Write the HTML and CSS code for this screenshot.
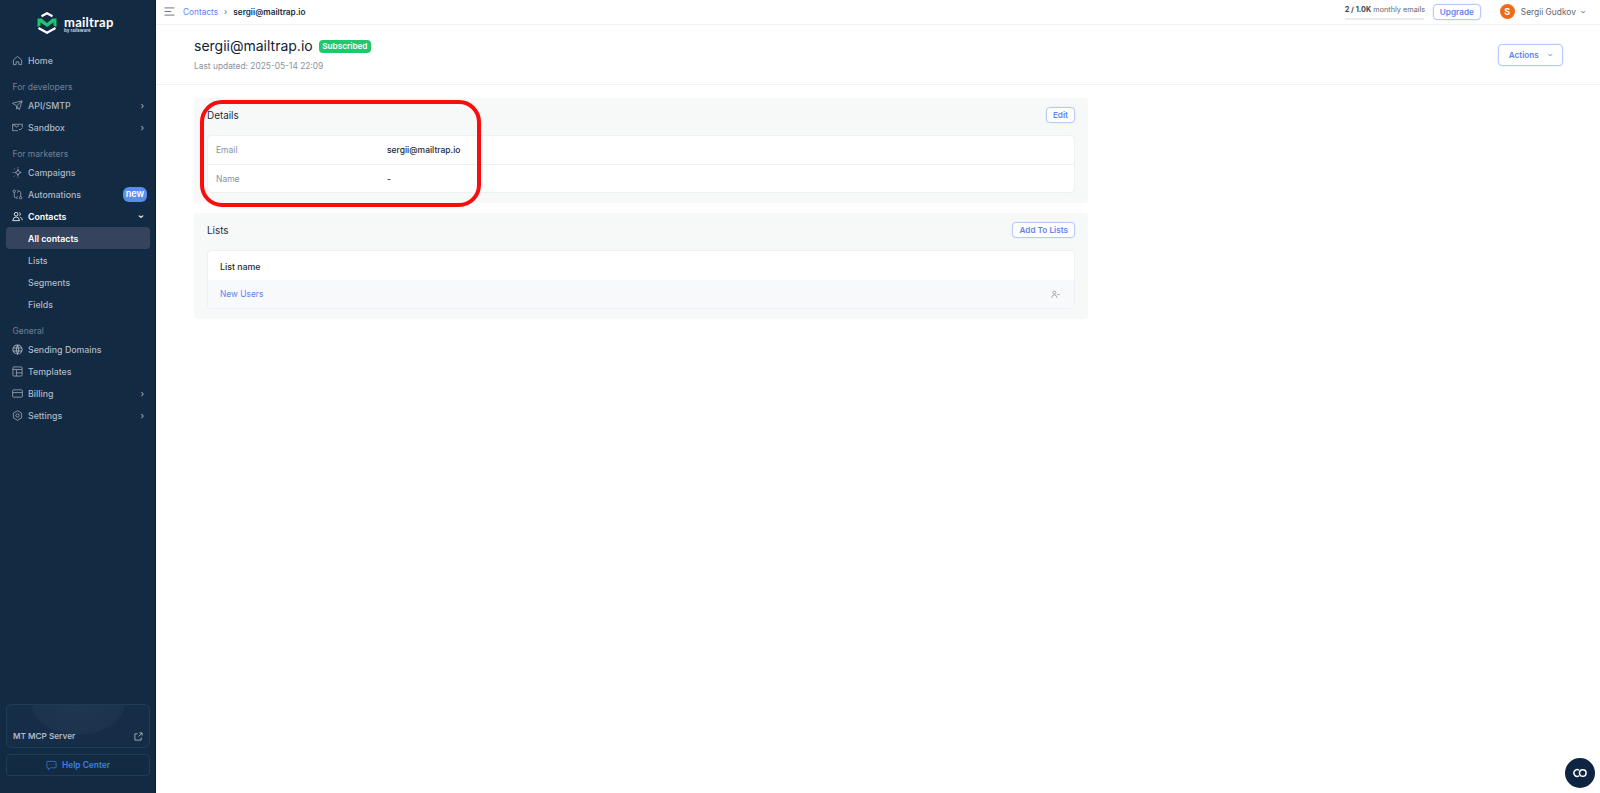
FILE: index.html
```html
<!DOCTYPE html>
<html lang="en">
<head>
<meta charset="utf-8">
<title>sergii@mailtrap.io</title>
<link rel="stylesheet" href="styles.css">
</head>
<body>
<div class="app">
  <aside class="sidebar">
    <div class="logo">
      <svg class="logo-mark" width="20" height="22" viewBox="0 0 20 22" fill="none">
        <path d="M4.500 4.200 10 1.200l5.500 3" stroke="#fff" stroke-width="2.200"/>
        <path d="M1.500 16 10 20.800 18.500 16" stroke="#fff" stroke-width="2.200"/>
        <path d="M.5 6.500h4L10 11l5.500-4.500h4V15l-3 -1.500V10.500L10 15 3.500 10.500v3L.5 15Z" fill="#21c46e"/>
      </svg>
      <div class="logo-text"><span class="logo-name">mailtrap</span><span class="logo-sub">by railsware</span></div>
    </div>
    <nav class="nav">
      <a class="item"><svg class="ic" viewBox="0 0 12 12"><path d="M1.500 5.500 6 1.500l4.500 4V10.500H7.500V7.500h-3v3H1.500Z"/></svg>Home</a>
      <div class="group">For developers</div>
      <a class="item"><svg class="ic" viewBox="0 0 12 12"><path d="M.5 3.500 11 1 8 10.500 5 6.500Zm4.500 3L11 1M5 6.500V10l1.500-1.500"/></svg>API/SMTP<span class="chev">›</span></a>
      <a class="item"><svg class="ic" viewBox="0 0 12 12"><path d="M6.500 9.500H.7V2.500h10.500V5.500M.7 2.500 5 5.500l2.500-1.500M7.500 7.500l1.300 1.300L11.500 6"/></svg>Sandbox<span class="chev">›</span></a>
      <div class="group">For marketers</div>
      <a class="item"><svg class="ic" viewBox="0 0 12 12"><path d="M6.500 2.500 7.500 5l2.500 1-2.500 1-1 2.500-1-2.500L3 6l2.500-1ZM.6 6h1.200M2 1.500l1 1M2 10.500l1-1M6.500.3v1.200M6.500 10.500v1.200"/></svg>Campaigns</a>
      <a class="item"><svg class="ic" viewBox="0 0 12 12"><circle cx="2.500" cy="2.500" r="1.300"/><circle cx="9.500" cy="9.500" r="1.300"/><path d="M2.500 4v4q0 1.500 1.500 1.500h1M9.500 8V4Q9.500 2.500 8 2.500H7M6 1 7 2.500 6 4M6 8 5 9.500 6 11"/></svg>Automations<span class="badge">new</span></a>
      <a class="item strong"><svg class="ic" viewBox="0 0 12 12"><circle cx="4.500" cy="3.500" r="2"/><path d="M.8 10.500q.5-4 3.700-4t3.700 4ZM8 1.700a2 2 0 0 1 0 3.600M9 6.800q2 .8 2.300 3.200"/></svg>Contacts<span class="chev down">›</span></a>
      <a class="item sub active">All contacts</a>
      <a class="item sub">Lists</a>
      <a class="item sub">Segments</a>
      <a class="item sub">Fields</a>
      <div class="group">General</div>
      <a class="item"><svg class="ic solid" viewBox="0 0 12 12"><circle cx="6" cy="6" r="5"/><path d="M1 4.300h10M1 7.700h10M6 1Q3.500 6 6 11 8.500 6 6 1"/></svg>Sending Domains</a>
      <a class="item"><svg class="ic" viewBox="0 0 12 12"><rect x="1" y="1" width="10" height="10" rx="1"/><path d="M1 3.800h10M4.800 3.800V11M4.800 7.500H11"/></svg>Templates</a>
      <a class="item"><svg class="ic" viewBox="0 0 12 12"><rect x=".7" y="2" width="10.600" height="8" rx="1"/><path d="M.7 5h10.600"/></svg>Billing<span class="chev">›</span></a>
      <a class="item"><svg class="ic" viewBox="0 0 12 12"><path d="M6 .8 10.500 3.400v5.200L6 11.200 1.500 8.600V3.400Z"/><circle cx="6" cy="6" r="1.800"/></svg>Settings<span class="chev">›</span></a>
    </nav>
    <div class="side-foot">
      <div class="mcp">
        <span class="mcp-title">MT MCP Server</span>
        <svg class="mcp-ic" viewBox="0 0 10 10"><path d="M4 2H1v7h7V6M5 5 9 1M6 1h3v3"/></svg>
      </div>
      <a class="help">
        <svg class="help-ic" viewBox="0 0 12 12"><path d="M2 1.500h8q1 0 1 1v5q0 1-1 1H5L2.500 10.500V8.500H2q-1 0-1-1v-5q0-1 1-1ZM3.500 5h.5M5.800 5h.5M8 5h.5"/></svg>
        Help Center
      </a>
    </div>
  </aside>

  <main class="main">
    <header class="topbar">
      <div class="crumbs">
        <svg class="burger" viewBox="0 0 12 10"><path d="M.5 1h11M.5 5h7.500M.5 9h11"/></svg>
        <a class="link">Contacts</a><span class="sep">›</span><span class="crumb-now">sergii@mailtrap.io</span>
      </div>
      <div class="top-right">
        <div class="quota">
          <div class="quota-text"><b>2 / 1.0K</b> monthly emails</div>
          <div class="quota-bar"></div>
        </div>
        <button class="btn upgrade">Upgrade</button>
        <div class="user">
          <span class="avatar">S</span>
          <span class="user-name">Sergii Gudkov</span>
          <span class="user-chev">›</span>
        </div>
      </div>
    </header>

    <section class="page-head">
      <div>
        <div class="title-row">
          <h1>sergii@mailtrap.io</h1>
          <span class="status">Subscribed</span>
        </div>
        <div class="updated">Last updated: 2025-05-14 22:09</div>
      </div>
      <button class="btn actions">Actions <span class="btn-chev">›</span></button>
    </section>

    <div class="content">
      <section class="card">
        <div class="card-head">
          <h2>Details</h2>
          <button class="btn small">Edit</button>
        </div>
        <div class="panel">
          <div class="row"><span class="label">Email</span><span class="value">sergii@mailtrap.io</span></div>
          <div class="row"><span class="label">Name</span><span class="value">-</span></div>
        </div>
      </section>

      <section class="card">
        <div class="card-head">
          <h2>Lists</h2>
          <button class="btn small">Add To Lists</button>
        </div>
        <div class="panel">
          <div class="thead">List name</div>
          <div class="tbody">
            <a class="link">New Users</a>
            <svg class="remove" viewBox="0 0 12 12"><circle cx="4.500" cy="3.500" r="2"/><path d="M1 10.500q.5-4 3.500-4t3.500 4M8.500 6h3"/></svg>
          </div>
        </div>
      </section>
    </div>
  </main>
</div>
<div class="annotation"></div>
<button class="chat"><svg viewBox="0 0 16 10"><path d="M7 2.200A3.300 3.300 0 1 0 7 7.800"/><circle cx="10.800" cy="5" r="3.300"/></svg></button>
</body>
</html>
```
FILE: styles.css
```css
* { box-sizing: border-box; }
html, body { height: 100%; }
body {
  margin: 0;
  font-family: Inter, "Liberation Sans", sans-serif;
  font-size: 8.800px;
  color: #0f2137;
  background: #fff;
  overflow: hidden;
}
h1, h2 { margin: 0; font-weight: 400; }
a { text-decoration: none; }

.app { display: flex; height: 793px; }

/* Sidebar */
.sidebar {
  width: 156px;
  flex: none;
  display: flex;
  flex-direction: column;
  background: #132a43;
  border-right: 1px solid #0d1e31;
}
.logo {
  height: 49px;
  padding: 12px 0 0 37px;
  display: flex;
  gap: 7px;
}
.logo-mark { flex: none; }
.logo-text { display: flex; flex-direction: column; color: #fff; padding-top: 4px; }
.logo-name { font: 700 13px/12px Lato, sans-serif; letter-spacing: .25px; }
.logo-sub { font-size: 4.500px; line-height: 5px; color: #c8d0da; font-weight: 700; }

.nav { display: flex; flex-direction: column; flex: 1; }
.item {
  height: 22px;
  margin: 0 5px 0 6px;
  padding: 0 6px;
  display: flex;
  align-items: center;
  gap: 5px;
  border-radius: 4px;
  color: #aeb8c4;
  font-weight: 500;
  position: relative;
}
.strong { color: #fff; font-weight: 600; }
.sub { padding-left: 22px; }
.active { background: #35435d; color: #fff; font-weight: 600; }
.ic {
  width: 11px; height: 11px; flex: none;
  fill: none; stroke: #9aa6b4; stroke-width: .9;
}
.ic.solid { stroke-width: 1.100; }
.strong .ic { stroke: #fff; }
.group {
  height: 15px;
  margin-top: 8px;
  padding-left: 12.500px;
  display: flex;
  align-items: center;
  font-size: 8.500px;
  color: #6f8096;
}
.chev { margin-left: auto; font-size: 9px; margin-right: 0; color: #9aa6b4; }
.chev.down { transform: rotate(90deg); color: #fff; }
.badge {
  margin-left: auto;
  margin-right: -3px;
  width: 24px; height: 15px;
  border-radius: 6px;
  background: #5b8def;
  color: #fff;
  font-size: 9.200px;
  font-weight: 600;
  text-align: center;
  line-height: 14px;
}

.side-foot { padding: 0 5px 17px 6px; display: flex; flex-direction: column; gap: 6px; }
.mcp {
  height: 44px;
  border: 1px solid #223c57;
  border-radius: 5px;
  display: flex;
  align-items: flex-end;
  justify-content: space-between;
  padding: 0 6px 6px 6px;
  background: radial-gradient(ellipse 47px 30px at 50% 0, #1f3750 0, #1b334d 96%, #162d47 100%);
}
.mcp-title { color: #b0b9c4; font-weight: 600; font-size: 8.200px; }
.mcp-ic { width: 9px; height: 9px; fill: none; stroke: #b6bfca; stroke-width: .9; }
.help {
  height: 22px;
  border: 1px solid #223c57;
  border-radius: 4px;
  display: flex;
  align-items: center;
  justify-content: center;
  gap: 5px;
  color: #3f7fe8;
  font-weight: 600;
  font-size: 8.400px;
}
.help-ic { width: 11px; height: 11px; fill: none; stroke: #3f7fe8; stroke-width: .8; }

/* Main */
.main { flex: 1; min-width: 0; display: flex; flex-direction: column; }
.topbar {
  height: 25px;
  padding: 0 15px 1px 8px;
  border-bottom: 1px solid #f1f2f4;
  display: flex;
  align-items: center;
  justify-content: space-between;
}
.crumbs { display: flex; align-items: center; font-size: 8.300px; }
.burger { width: 11px; height: 9px; fill: none; stroke: #6c7684; stroke-width: 1.100; margin-right: 8px; }
.link { color: #5d85f0; }
.sep { margin: 0 6px; color: #555f6c; }
.crumb-now { font-weight: 600; color: #1a2b3f; font-size: 8.200px; }
.top-right { display: flex; align-items: center; }
.quota { width: 79px; margin-right: 9px; }
.quota-text { font-size: 7.300px; color: #5d6672; white-space: nowrap; line-height: 11px; }
.quota-text b { color: #3e4752; font-weight: 700; }
.quota-bar { height: 2px; margin-top: 3px; background: #e9ebee; }
.btn {
  font-family: inherit;
  color: #5d85f0;
  background: #fff;
  border: 1px solid #b8caf7;
  border-radius: 4px;
  font-weight: 600;
  padding: 0;
  box-shadow: 0 0 0 .5px #e4ebfc;
}
.upgrade { width: 48px; height: 16px; font-size: 8.200px; }
.user { display: flex; align-items: center; margin-left: 19px; color: #5d6672; font-size: 8.400px; }
.avatar {
  width: 15px; height: 15px;
  border-radius: 50%;
  background: #ef6a16;
  color: #fff;
  font-weight: 700;
  font-size: 9px;
  display: flex; align-items: center; justify-content: center;
  margin-right: 6px;
}
.user-chev { margin-left: 6px; transform: rotate(90deg); font-size: 8px; }

.page-head {
  height: 60px;
  padding: 0 37px 0 38px;
  border-bottom: 1px solid #f1f2f4;
  display: flex;
  align-items: flex-start;
  justify-content: space-between;
}
.title-row { display: flex; align-items: center; gap: 6px; margin-top: 10px; }
h1 { font-size: 14px; line-height: 22px; color: #0f2137; }
.status {
  height: 13px;
  padding: 0 3.500px;
  border-radius: 4px;
  background: #1fc76d;
  color: #fff;
  font-size: 8.200px;
  font-weight: 600;
  line-height: 13px;
}
.updated { margin-top: 4px; font-size: 8.400px; color: #8a929c; }
.actions { width: 65px; height: 22px; margin-top: 19px; font-size: 8.200px; }
.btn-chev { display: inline-block; margin-left: 8px; transform: rotate(90deg); color: #8ea6e6; }

.content { width: 932px; padding: 13px 0 0 38px; display: flex; flex-direction: column; gap: 10px; }
.card { background: #f7f8f8; border-radius: 4px; padding: 0 13px 10px; }
.card-head { height: 37px; display: flex; align-items: center; justify-content: space-between; padding-bottom: 4px; }
h2 { font-size: 9.900px; color: #1d2d40; }
.small { height: 16px; padding: 0 6px; font-size: 8.200px; }
.panel { background: #fff; border: 1px solid #eef0f5; border-radius: 4px; overflow: hidden; }
.row { height: 28px; display: flex; align-items: center; padding-left: 8px; }
.row + .row { border-top: 1px solid #eef0f5; }
.label { width: 171px; color: #8a929c; font-size: 8.500px; }
.value { color: #1a2b3f; font-weight: 500; font-size: 8.500px; }
.thead { height: 29px; padding: 1px 0 0 12px; display: flex; align-items: center; font-weight: 500; color: #1a2b3f; }
.tbody {
  height: 28px;
  padding: 0 14px 0 12px;
  background: #f8f9fa;
  display: flex;
  align-items: center;
  justify-content: space-between;
  font-size: 8.400px;
}
.remove { width: 9px; height: 9px; fill: none; stroke: #7c8591; stroke-width: .9; }

/* Overlays */
.annotation {
  position: absolute;
  left: 200px; top: 100px;
  width: 281px; height: 107px;
  border: 4px solid #fb0d0d;
  border-radius: 22px;
}
.chat {
  position: absolute;
  left: 1565px; top: 758px;
  width: 30px; height: 30px;
  border: 0; padding: 0;
  border-radius: 50%;
  background: #0f2440;
  display: flex; align-items: center; justify-content: center;
}
.chat svg { width: 16px; height: 10px; fill: none; stroke: #fff; stroke-width: 1.500; }
```
